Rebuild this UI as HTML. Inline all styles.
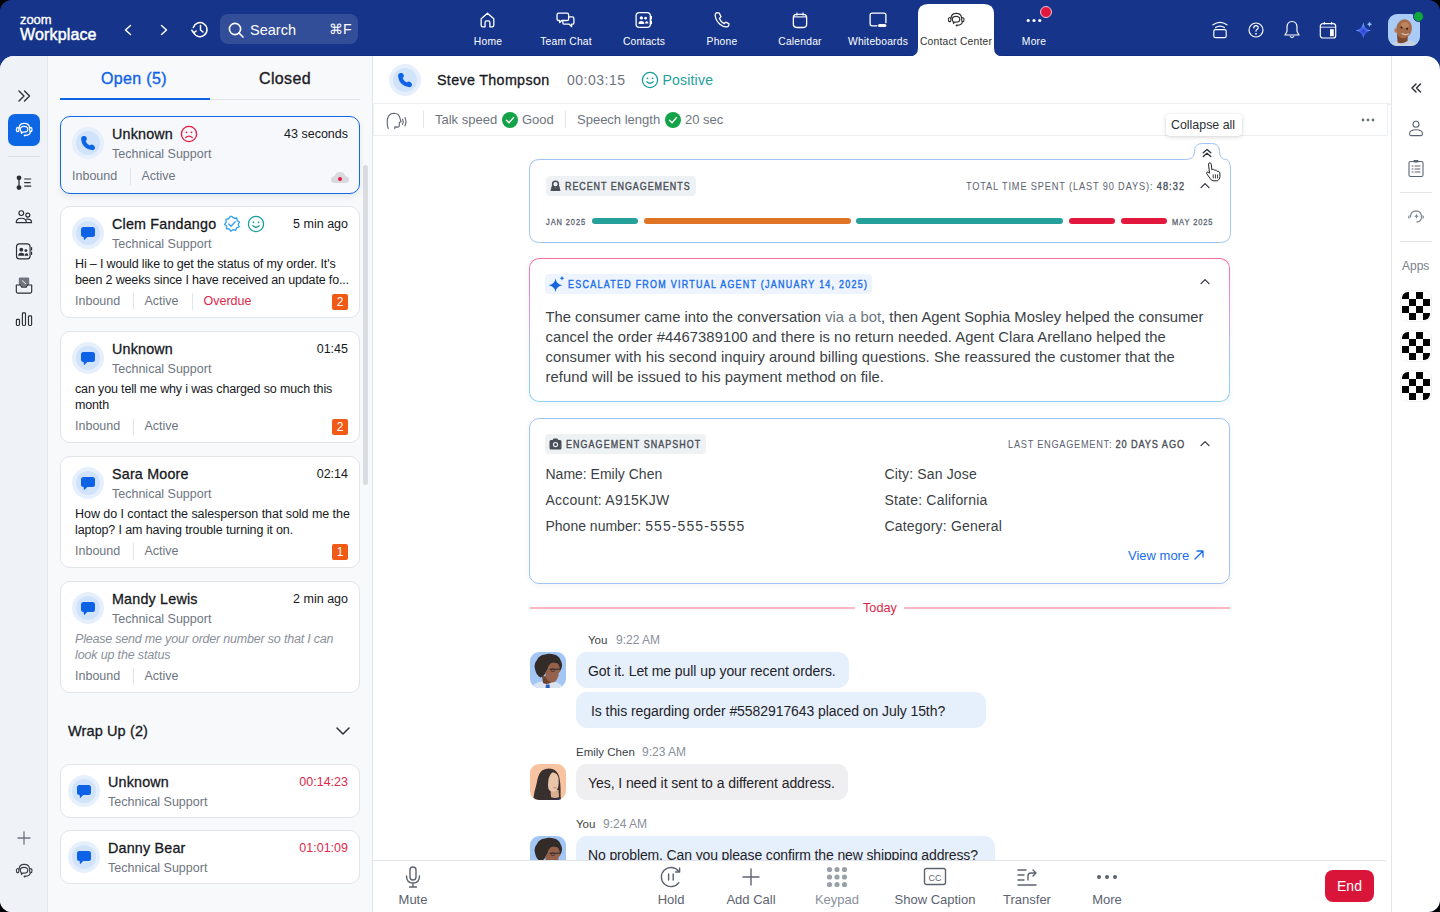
<!DOCTYPE html>
<html><head><meta charset="utf-8"><style>
*{box-sizing:border-box;margin:0;padding:0}
html,body{width:1440px;height:912px;overflow:hidden;background:#000;font-family:"Liberation Sans",sans-serif;color:#131619}
.abs{position:absolute}
.t{position:absolute;white-space:nowrap}
.sb{font-weight:400;-webkit-text-stroke:0.3px currentColor}
#win{position:absolute;left:0;top:0;width:1440px;height:912px;background:#15348a;border-radius:12px;overflow:hidden}
#body{position:absolute;left:0;top:56px;width:1440px;height:856px;background:#fff;border-radius:14px 14px 0 0;overflow:hidden}
</style></head><body>
<div id="win">
 <div class="abs" style="left:0;top:0;width:1440px;height:56px;background:#15348a">
  <div class="abs" style="left:20px;top:12px;font-size:13px;font-weight:400;-webkit-text-stroke:0.35px #fff;color:#fff;letter-spacing:-0.1px;line-height:16px">zoom</div>
  <div class="abs" style="left:20px;top:25.5px;font-size:16px;font-weight:400;-webkit-text-stroke:0.45px #fff;color:#fff;letter-spacing:0.15px;line-height:18px">Workplace</div>
  <svg class="abs" style="left:122px;top:23px" width="12" height="14" viewBox="0 0 12 14"><path d="M8.5 2.5 L3.5 7 L8.5 11.5" fill="none" stroke="#fff" stroke-width="1.5" stroke-linecap="round" stroke-linejoin="round"/></svg>
  <svg class="abs" style="left:158px;top:23px" width="12" height="14" viewBox="0 0 12 14"><path d="M3.5 2.5 L8.5 7 L3.5 11.5" fill="none" stroke="#fff" stroke-width="1.5" stroke-linecap="round" stroke-linejoin="round"/></svg>
  <svg class="abs" style="left:190px;top:20px" width="20" height="20" viewBox="0 0 20 20"><path d="M3.6 12.5 A7 7 0 1 0 3.3 7.5" fill="none" stroke="#fff" stroke-width="1.5" stroke-linecap="round"/><path d="M1.8 10.2 L3.6 12.8 L6.2 11" fill="none" stroke="#fff" stroke-width="1.5" stroke-linecap="round" stroke-linejoin="round"/><path d="M10.5 5.5 V10 L13 12" fill="none" stroke="#fff" stroke-width="1.5" stroke-linecap="round" stroke-linejoin="round"/></svg>
  <div class="abs" style="left:220px;top:14px;width:138px;height:30px;border-radius:8px;background:rgba(255,255,255,0.13)"></div>
  <svg class="abs" style="left:228px;top:22px" width="17" height="17" viewBox="0 0 17 17"><circle cx="7" cy="7" r="5.6" fill="none" stroke="#fff" stroke-width="1.6"/><path d="M11 11 L15 15" stroke="#fff" stroke-width="1.7" stroke-linecap="round"/></svg>
  <div class="abs" style="left:250px;top:21.5px;font-size:14.5px;color:#fff;line-height:17px">Search</div>
  <div class="abs" style="left:329px;top:21px;font-size:14px;color:#fff;line-height:17px">&#8984;F</div>
  <svg class="abs" style="left:908px;top:4px" width="96" height="53" viewBox="0 0 96 53"><path d="M1 53 V52.5 Q10 52.5 10 44 V10 Q10 0 20 0 H76 Q86 0 86 10 V44 Q86 52.5 95 52.5 V53 Z" fill="#fff"/></svg>
  <svg class="abs" style="left:478px;top:10px" width="20" height="20" viewBox="0 0 19 19"><path d="M3 8.2 L9 3 L15 8.2 V14.5 Q15 16 13.5 16 H11.3 V11.8 Q11.3 10.3 9.8 10.3 H8.2 Q6.7 10.3 6.7 11.8 V16 H4.5 Q3 16 3 14.5 Z" fill="none" stroke="#fff" stroke-width="1.25" stroke-linecap="round" stroke-linejoin="round"/></svg>
  <div class="abs" style="left:443px;width:90px;top:35px;text-align:center;font-size:10.3px;letter-spacing:0.2px;line-height:13px;color:#fff">Home</div>
  <svg class="abs" style="left:556px;top:10px" width="20" height="20" viewBox="0 0 19 19"><path d="M2.5 3 H10.5 Q12 3 12 4.5 V8.5 Q12 10 10.5 10 H5.5 L3.5 12 V10 H2.5 Q1 10 1 8.5 V4.5 Q1 3 2.5 3 Z" fill="none" stroke="#fff" stroke-width="1.25" stroke-linecap="round" stroke-linejoin="round"/><path d="M12 6.5 H15.5 Q17 6.5 17 8 V12 Q17 13.5 15.5 13.5 H14.8 V15.8 L12.6 13.5 H8 Q6.5 13.5 6.5 12 V10" fill="none" stroke="#fff" stroke-width="1.25" stroke-linecap="round" stroke-linejoin="round"/></svg>
  <div class="abs" style="left:521px;width:90px;top:35px;text-align:center;font-size:10.3px;letter-spacing:0.2px;line-height:13px;color:#fff">Team Chat</div>
  <svg class="abs" style="left:634px;top:10px" width="20" height="20" viewBox="0 0 19 19"><rect x="2" y="2.5" width="13.5" height="14" rx="3" fill="none" stroke="#fff" stroke-width="1.25" stroke-linecap="round" stroke-linejoin="round"/><path d="M16.5 6 V8.5 M16.5 10.5 V13" fill="none" stroke="#fff" stroke-width="1.25" stroke-linecap="round" stroke-linejoin="round"/><circle cx="7" cy="7.5" r="1.6" fill="#fff"/><circle cx="11" cy="7.8" r="1.3" fill="#fff"/><path d="M4.2 13.2 Q4.2 10.4 7 10.4 Q9.8 10.4 9.8 13.2 Z" fill="#fff"/><path d="M10.4 12.8 Q10.6 10.6 12.4 10.8 Q13.8 11 13.6 12.8 Z" fill="#fff"/></svg>
  <div class="abs" style="left:599px;width:90px;top:35px;text-align:center;font-size:10.3px;letter-spacing:0.2px;line-height:13px;color:#fff">Contacts</div>
  <svg class="abs" style="left:712px;top:10px" width="20" height="20" viewBox="0 0 19 19"><path d="M4.5 2.5 Q3 3 3 5 Q3.5 10 7.5 13.5 Q11 16.5 14.5 16 Q16 15.5 16 14.5 V13 L13 11.5 L11.5 13 Q8.5 11.5 7 8 L8.5 6.5 L7 3 Z" fill="none" stroke="#fff" stroke-width="1.25" stroke-linecap="round" stroke-linejoin="round"/></svg>
  <div class="abs" style="left:677px;width:90px;top:35px;text-align:center;font-size:10.3px;letter-spacing:0.2px;line-height:13px;color:#fff">Phone</div>
  <svg class="abs" style="left:790px;top:10px" width="20" height="20" viewBox="0 0 19 19"><rect x="3.2" y="4.2" width="12.6" height="12.4" rx="3" fill="none" stroke="#fff" stroke-width="1.25" stroke-linecap="round" stroke-linejoin="round"/><path d="M3.5 6.6 H15.5 M6.6 2.8 V5 M12.4 2.8 V5" fill="none" stroke="#fff" stroke-width="1.1" stroke-linecap="round" stroke-linejoin="round" opacity="0.9"/></svg>
  <div class="abs" style="left:755px;width:90px;top:35px;text-align:center;font-size:10.3px;letter-spacing:0.2px;line-height:13px;color:#fff">Calendar</div>
  <svg class="abs" style="left:868px;top:10px" width="20" height="20" viewBox="0 0 19 19"><path d="M8.5 15 H4 Q2 15 2 13 V5 Q2 3 4 3 H15 Q17 3 17 5 V12" fill="none" stroke="#fff" stroke-width="1.25" stroke-linecap="round" stroke-linejoin="round"/><rect x="9.5" y="13.2" width="8" height="3" rx="1.5" fill="#fff"/></svg>
  <div class="abs" style="left:833px;width:90px;top:35px;text-align:center;font-size:10.3px;letter-spacing:0.2px;line-height:13px;color:#fff">Whiteboards</div>
  <svg class="abs" style="left:946px;top:10px" width="20" height="20" viewBox="0 0 20 20"><path d="M5 8.2 Q5.3 3.4 10.3 3.4 Q15.3 3.4 15.6 8" fill="none" stroke="#333" stroke-width="1.2" stroke-linecap="round" stroke-linejoin="round"/><ellipse cx="3.7" cy="9.6" rx="1.3" ry="2.1" fill="none" stroke="#333" stroke-width="1.2" stroke-linecap="round" stroke-linejoin="round"/><ellipse cx="16.8" cy="9.6" rx="1.2" ry="2.1" fill="none" stroke="#333" stroke-width="1.2" stroke-linecap="round" stroke-linejoin="round"/><path d="M16.4 11.8 Q16 15.2 11 15.4" fill="none" stroke="#333" stroke-width="1.2" stroke-linecap="round" stroke-linejoin="round"/><circle cx="10.6" cy="15.4" r="1" fill="#333"/><path d="M6.3 9.2 Q6.3 6.3 10 6.3 Q13.8 6.3 13.8 9.2 Q13.8 12.1 10 12.1 H8.4 L7.5 13.5 L7.3 11.7 Q6.3 11 6.3 9.2 Z" fill="none" stroke="#333" stroke-width="1.2" stroke-linecap="round" stroke-linejoin="round"/></svg>
  <div class="abs" style="left:911px;width:90px;top:35px;text-align:center;font-size:10.3px;letter-spacing:0.2px;line-height:13px;color:#333">Contact Center</div>
  <svg class="abs" style="left:1024px;top:10px" width="20" height="20" viewBox="0 0 19 19"><circle cx="4" cy="10" r="1.5" fill="#fff"/><circle cx="9.5" cy="10" r="1.5" fill="#fff"/><circle cx="15" cy="10" r="1.5" fill="#fff"/></svg>
  <div class="abs" style="left:989px;width:90px;top:35px;text-align:center;font-size:10.3px;letter-spacing:0.2px;line-height:13px;color:#fff">More</div>
  <div class="abs" style="left:1040px;top:6px;width:12px;height:12px;border-radius:50%;background:#e3173e;border:1px solid #e9c6d3"></div>
  <svg class="abs" style="left:1209px;top:19px" width="22" height="22" viewBox="0 0 22 22"><path d="M4 5.8 Q11 0.8 18 5.8 M6.6 8.6 Q11 5.6 15.4 8.6" fill="none" stroke="#fff" stroke-width="1.15" stroke-linecap="round"/><rect x="4.8" y="10.6" width="12.4" height="8" rx="1.6" fill="none" stroke="#fff" stroke-width="1.15"/></svg>
  <svg class="abs" style="left:1246px;top:20px" width="20" height="20" viewBox="0 0 20 20"><circle cx="10" cy="10" r="7" fill="none" stroke="#fff" stroke-width="1.15" stroke-linecap="round" stroke-linejoin="round"/><path d="M7.8 8 Q7.8 5.6 10 5.6 Q12.2 5.6 12.2 7.7 Q12.2 9 10.6 9.7 Q10 10 10 11.2" fill="none" stroke="#fff" stroke-width="1.15" stroke-linecap="round" stroke-linejoin="round"/><circle cx="10" cy="13.8" r="0.9" fill="#fff"/></svg>
  <svg class="abs" style="left:1282px;top:19px" width="20" height="22" viewBox="0 0 20 22"><path d="M10 2.5 Q15 2.5 15 8.5 V12.5 L17 16 H3 L5 12.5 V8.5 Q5 2.5 10 2.5 Z" fill="none" stroke="#fff" stroke-width="1.15" stroke-linecap="round" stroke-linejoin="round"/><path d="M8.3 17.5 Q10 19.5 11.7 17.5" fill="none" stroke="#fff" stroke-width="1.15" stroke-linecap="round" stroke-linejoin="round"/></svg>
  <svg class="abs" style="left:1318px;top:20px" width="20" height="20" viewBox="0 0 20 20"><rect x="2.3" y="3.6" width="15.4" height="14.4" rx="2.6" fill="none" stroke="#fff" stroke-width="1.2" stroke-linecap="round" stroke-linejoin="round"/><path d="M2.5 7.2 H17.5" stroke="#fff" stroke-width="1" opacity="0.85"/><path d="M6.3 2.4 V4 M13.7 2.4 V4" fill="none" stroke="#fff" stroke-width="1.2" stroke-linecap="round" stroke-linejoin="round"/><rect x="12" y="9.2" width="3.8" height="7" fill="#fff"/></svg>
  <svg class="abs" style="left:1353px;top:18px" width="22" height="22" viewBox="0 0 22 22"><defs><radialGradient id="spk" cx="0.5" cy="0.55" r="0.5"><stop offset="0" stop-color="#2b3fd6"/><stop offset="0.55" stop-color="#4a6ff0"/><stop offset="1" stop-color="#8cc4ff"/></radialGradient></defs><path d="M10.3 4.5 Q11.2 11 17.8 12.5 Q11.2 14 10.3 20.5 Q9.4 14 2.8 12.5 Q9.4 11 10.3 4.5 Z" fill="url(#spk)"/><path d="M16.5 3.5 Q16.9 5.8 19 6.3 Q16.9 6.8 16.5 9 Q16.1 6.8 14 6.3 Q16.1 5.8 16.5 3.5 Z" fill="#8cc4ff"/></svg>
  <div class="abs" style="left:1388px;top:14px;width:32px;height:32px;border-radius:9px;background:#a9cbf5;overflow:hidden"><svg width="32" height="32" viewBox="0 0 32 32"><path d="M2 33 Q5 27.5 11 26.5 L21 26 Q28 27.5 30 33 Z" fill="#c6d1e2"/><path d="M9 20 L9.5 28.5 Q14 30.5 19.5 27 L20 20 Z" fill="#7a4930"/><ellipse cx="16" cy="14.8" rx="7.8" ry="9.6" transform="rotate(12 16 14.8)" fill="#a66c49"/><ellipse cx="17" cy="11" rx="4" ry="3" fill="#bd845e"/><ellipse cx="7.8" cy="16.5" rx="1.5" ry="2.3" fill="#b57a55"/><circle cx="13.5" cy="13.5" r="1" fill="#2a1a12"/><circle cx="19" cy="14.8" r="1" fill="#2a1a12"/><path d="M14 19.5 Q17 21.5 20.5 20" stroke="#d8c2b0" stroke-width="1.1" fill="none" stroke-linecap="round"/></svg></div>
  <div class="abs" style="left:1412.5px;top:10.5px;width:11px;height:11px;border-radius:50%;background:#0fa83a;border:1.5px solid #15348a"></div>
 </div>
 <div class="abs" style="left:16px;top:55px;width:894px;height:1px;background:#112e80"></div><div class="abs" style="left:1003px;top:55px;width:421px;height:1px;background:#112e80"></div>
 <div id="body">
<div class="abs" style="left:0;top:0;width:47px;height:856px;background:#eff2f6"></div>
<div class="abs" style="left:47px;top:0;width:1px;height:856px;background:#e3e6ea"></div>
<div class="abs" style="left:48px;top:0;width:324px;height:856px;background:#f7f9fb"></div>
<div class="abs" style="left:372px;top:0;width:1px;height:856px;background:#e1e4e9"></div>
<div class="abs" style="left:1391px;top:0;width:1px;height:856px;background:#e1e4e9"></div>
<div class="abs" style="left:0;top:0">
   <svg class="abs" style="left:16px;top:33px" width="16" height="14" viewBox="0 0 16 14"><path d="M3 2 L8 7 L3 12 M8.5 2 L13.5 7 L8.5 12" fill="none" stroke="#2b2f36" stroke-width="1.4" stroke-linecap="round" stroke-linejoin="round"/></svg>
   <div class="abs" style="left:8px;top:58px;width:32px;height:32px;border-radius:7px;background:#0d66e3"></div>
   <svg class="abs" style="left:14px;top:64px" width="20" height="20" viewBox="0 0 20 20"><path d="M5 8.2 Q5.3 3.4 10.3 3.4 Q15.3 3.4 15.6 8" fill="none" stroke="#fff" stroke-width="1.3" stroke-linecap="round" stroke-linejoin="round"/><ellipse cx="3.7" cy="9.6" rx="1.3" ry="2.1" fill="none" stroke="#fff" stroke-width="1.3" stroke-linecap="round" stroke-linejoin="round"/><ellipse cx="16.8" cy="9.6" rx="1.2" ry="2.1" fill="none" stroke="#fff" stroke-width="1.3" stroke-linecap="round" stroke-linejoin="round"/><path d="M16.4 11.8 Q16 15.2 11 15.4" fill="none" stroke="#fff" stroke-width="1.3" stroke-linecap="round" stroke-linejoin="round"/><circle cx="10.6" cy="15.4" r="1" fill="#fff"/><path d="M6.3 9.2 Q6.3 6.3 10 6.3 Q13.8 6.3 13.8 9.2 Q13.8 12.1 10 12.1 H8.4 L7.5 13.5 L7.3 11.7 Q6.3 11 6.3 9.2 Z" fill="none" stroke="#fff" stroke-width="1.3" stroke-linecap="round" stroke-linejoin="round"/></svg>
   <div class="abs" style="left:8px;top:100px;width:32px;height:1px;background:#dde1e6"></div>
   <svg class="abs" style="left:14px;top:116px" width="20" height="20" viewBox="0 0 20 20"><circle cx="5" cy="5.8" r="2.4" fill="#2b2f36"/><circle cx="5" cy="15.6" r="2.4" fill="#2b2f36"/><path d="M5 6 V15.5" stroke="#2b2f36" stroke-width="1.3"/><path d="M10.2 7 H17.2 M10.2 10.6 H16.6 M10.2 14.1 H17.2" stroke="#2b2f36" stroke-width="1.1"/></svg>
   <svg class="abs" style="left:14px;top:151px" width="20" height="20" viewBox="0 0 20 20"><g fill="none" stroke="#2b2f36" stroke-width="1.15" stroke-linecap="round" stroke-linejoin="round"><circle cx="7.3" cy="6.1" r="2.4"/><path d="M2.2 15.6 Q2.2 11.2 7.3 11.2 Q12.4 11.2 12.4 15.6 Z"/><circle cx="13.8" cy="8.1" r="2"/><path d="M12.6 12.1 Q17.6 11.7 17.6 15.6 H13"/></g></svg>
   <svg class="abs" style="left:14px;top:185px" width="20" height="20" viewBox="0 0 20 20"><rect x="2.5" y="2.9" width="13.6" height="15" rx="3" fill="none" stroke="#2b2f36" stroke-width="1.15" stroke-linecap="round" stroke-linejoin="round"/><path d="M17.6 6.5 V9 M17.6 11 V13.5" fill="none" stroke="#2b2f36" stroke-width="1.15" stroke-linecap="round" stroke-linejoin="round"/><circle cx="7.3" cy="8.7" r="1.9" fill="#2b2f36"/><circle cx="11.9" cy="9.6" r="1.45" fill="#2b2f36"/><path d="M4.2 14.7 Q4.2 11.7 7.3 11.7 Q10.4 11.7 10.4 14.7 Z" fill="#2b2f36"/><path d="M10.6 14.7 Q10.8 12.3 12.5 12.3 Q14.3 12.3 14.3 14.7 Z" fill="#2b2f36"/></svg>
   <svg class="abs" style="left:14px;top:219px" width="20" height="20" viewBox="0 0 20 20"><path d="M4.8 10 V3.6 Q4.8 2.5 5.9 2.5 H14.1 Q15.2 2.5 15.2 3.6 V10 H13 L12 11.6 H8 L7 10 Z" fill="#72777f"/><path d="M8 5.5 L12 9" stroke="#eff2f6" stroke-width="1"/><path d="M2.3 10 H6.5 L7.8 12.1 H12.2 L13.5 10 H17.7 V16.6 Q17.7 18.1 16.2 18.1 H3.8 Q2.3 18.1 2.3 16.6 Z" fill="none" stroke="#2b2f36" stroke-width="1.15" stroke-linecap="round" stroke-linejoin="round"/></svg>
   <svg class="abs" style="left:14px;top:254px" width="20" height="20" viewBox="0 0 20 20"><g fill="none" stroke="#2b2f36" stroke-width="1.15" stroke-linecap="round" stroke-linejoin="round"><rect x="2.4" y="9.4" width="3.1" height="6.1" rx="0.9"/><rect x="8.4" y="2.8" width="3.1" height="12.7" rx="0.9"/><rect x="14.5" y="5.8" width="3.1" height="9.7" rx="0.9"/></g></svg>
   <svg class="abs" style="left:16px;top:774px" width="16" height="16" viewBox="0 0 16 16"><path d="M8 2 V14 M2 8 H14" stroke="#6e7680" stroke-width="1.3" stroke-linecap="round"/></svg>
   <svg class="abs" style="left:14px;top:805px" width="20" height="20" viewBox="0 0 20 20"><path d="M5 8.2 Q5.3 3.4 10.3 3.4 Q15.3 3.4 15.6 8" fill="none" stroke="#3a3f47" stroke-width="1.2" stroke-linecap="round" stroke-linejoin="round"/><ellipse cx="3.7" cy="9.6" rx="1.3" ry="2.1" fill="none" stroke="#3a3f47" stroke-width="1.2" stroke-linecap="round" stroke-linejoin="round"/><ellipse cx="16.8" cy="9.6" rx="1.2" ry="2.1" fill="none" stroke="#3a3f47" stroke-width="1.2" stroke-linecap="round" stroke-linejoin="round"/><path d="M16.4 11.8 Q16 15.2 11 15.4" fill="none" stroke="#3a3f47" stroke-width="1.2" stroke-linecap="round" stroke-linejoin="round"/><circle cx="10.6" cy="15.4" r="1" fill="#3a3f47"/><path d="M6.3 9.2 Q6.3 6.3 10 6.3 Q13.8 6.3 13.8 9.2 Q13.8 12.1 10 12.1 H8.4 L7.5 13.5 L7.3 11.7 Q6.3 11 6.3 9.2 Z" fill="none" stroke="#3a3f47" stroke-width="1.2" stroke-linecap="round" stroke-linejoin="round"/></svg>
  </div></div>
 <div class="t sb" style="left:101px;top:69.5px;font-size:16px;letter-spacing:0.35px;-webkit-text-stroke:0.35px #0e62e6;color:#0e62e6;line-height:18px">Open (5)</div><div class="abs" style="left:60px;top:98px;width:150px;height:2px;background:#0e62e6"></div><div class="abs" style="left:210px;top:99px;width:150px;height:1px;background:#dfe3e8"></div><div class="t sb" style="left:259px;top:69.5px;font-size:16px;letter-spacing:0.35px;-webkit-text-stroke:0.35px #1d2024;color:#1d2024;line-height:18px">Closed</div><div class="abs" style="left:363px;top:165px;width:5px;height:320px;border-radius:3px;background:#d9dce0"></div><div class="abs" style="left:60px;top:116px;width:300px;height:78px;border-radius:10px;border:1.3px solid #1069e6;background:#f6f8fb;box-shadow:0 3px 6px rgba(0,0,0,0.08)"></div><div class="abs" style="left:72px;top:127px;width:32px;height:32px;border-radius:50%;background:#e6effc"></div><div class="abs" style="left:76px;top:131px;width:24px;height:24px;border-radius:50%;background:#d1e3fa"></div><svg class="abs" style="left:80px;top:135px" width="16" height="16" viewBox="0 0 16 16"><path d="M2.5 1.2 Q1 1.8 1.1 4 Q1.5 9 5 12.3 Q8.5 15.3 12.8 15.2 Q14.6 15 15 13.3 Q15.2 11.3 13.5 10.2 L12.6 9.7 Q11 9 10 10.4 Q7 9.4 5.6 6.3 Q7 5.3 6.9 3.6 Q6.5 1.6 5 1.1 Q3.7 0.8 2.5 1.2 Z" fill="#0b66e4"/></svg><div class="t sb" style="left:112px;top:126.5px;font-size:14.3px;letter-spacing:0.2px;line-height:15px;color:#16191d">Unknown</div><svg class="abs" style="left:180px;top:125px" width="18" height="18" viewBox="0 0 18 18"><circle cx="9" cy="9" r="7.6" fill="none" stroke="#e8173f" stroke-width="1.3"/><circle cx="6.5" cy="7.3" r="0.9" fill="#e8173f"/><circle cx="11.5" cy="7.3" r="0.9" fill="#e8173f"/><path d="M5.8 12.5 Q9 9.8 12.2 12.5" fill="none" stroke="#e8173f" stroke-width="1.3" stroke-linecap="round"/></svg><div class="t" style="right:1092px;top:127px;font-size:12.5px;line-height:15px;color:#16191d">43 seconds</div><div class="t" style="left:112px;top:147px;font-size:12.5px;line-height:15px;color:#6e7580">Technical Support</div><div class="t" style="left:72px;top:169px;font-size:12.5px;line-height:15px;color:#6e7580">Inbound</div><div class="abs" style="left:129.5px;top:168px;width:1px;height:17px;background:#e1e4e8"></div><div class="t" style="left:141.5px;top:169px;font-size:12.5px;line-height:15px;color:#6e7580">Active</div><svg class="abs" style="left:330px;top:170px" width="20" height="14" viewBox="0 0 20 14"><path d="M5 13 Q1 13 1 9.5 Q1 6.5 4.5 6.3 Q5.5 2 10 2 Q14.5 2 15.3 6.3 Q19 6.5 19 9.8 Q19 13 15.5 13 Z" fill="#d7d9dd"/><circle cx="10" cy="9" r="2" fill="#e8173f"/></svg><div class="abs" style="left:60px;top:206px;width:300px;height:112px;border-radius:10px;border:1px solid #e1e4e8;background:#fff"></div><div class="abs" style="left:72px;top:217px;width:32px;height:32px;border-radius:50%;background:#e6effc"></div><div class="abs" style="left:76px;top:221px;width:24px;height:24px;border-radius:50%;background:#d1e3fa"></div><svg class="abs" style="left:80px;top:225px" width="16" height="16" viewBox="0 0 16 16"><path d="M3.5 2 H12.5 Q15 2 15 4.5 V9.5 Q15 12 12.5 12 H7.3 L4 15.2 L3.6 12 Q1 12 1 9.5 V4.5 Q1 2 3.5 2 Z" fill="#0e62e6"/></svg><div class="t sb" style="left:112px;top:216.5px;font-size:14.3px;letter-spacing:0.2px;line-height:15px;color:#16191d">Clem Fandango</div><svg class="abs" style="left:223px;top:215px" width="18" height="18" viewBox="0 0 18 18"><path d="M9 1.5 L11 3.3 L13.6 3 L14.2 5.6 L16.5 7 L15.3 9.3 L16.1 11.9 L13.6 12.8 L12.6 15.3 L10 14.6 L7.8 16.2 L6.3 14 L3.6 13.8 L3.5 11.1 L1.6 9.3 L3.2 7.1 L3 4.4 L5.6 3.8 L7 1.5 Z" fill="none" stroke="#3aa3ee" stroke-width="1.4" stroke-linejoin="round"/><path d="M5.8 9 L8 11.2 L12.2 6.8" fill="none" stroke="#3aa3ee" stroke-width="1.4" stroke-linecap="round" stroke-linejoin="round"/></svg><svg class="abs" style="left:247px;top:215px" width="18" height="18" viewBox="0 0 18 18"><circle cx="9" cy="9" r="7.6" fill="none" stroke="#1a9d9b" stroke-width="1.3"/><circle cx="6.5" cy="7.3" r="0.9" fill="#1a9d9b"/><circle cx="11.5" cy="7.3" r="0.9" fill="#1a9d9b"/><path d="M5.8 10.8 Q9 13.8 12.2 10.8" fill="none" stroke="#1a9d9b" stroke-width="1.3" stroke-linecap="round"/></svg><div class="t" style="right:1092px;top:217px;font-size:12.5px;line-height:15px;color:#16191d">5 min ago</div><div class="t" style="left:112px;top:237px;font-size:12.5px;line-height:15px;color:#6e7580">Technical Support</div><div class="t" style="left:75px;top:257px;font-size:12.5px;letter-spacing:-0.15px;line-height:15px;color:#16191d;">Hi – I would like to get the status of my order. It's</div><div class="t" style="left:75px;top:273px;font-size:12.5px;letter-spacing:-0.15px;line-height:15px;color:#16191d;">been 2 weeks since I have received an update fo...</div><div class="t" style="left:75px;top:294px;font-size:12.5px;line-height:15px;color:#6e7580">Inbound</div><div class="abs" style="left:132.5px;top:293px;width:1px;height:17px;background:#e1e4e8"></div><div class="t" style="left:144.5px;top:294px;font-size:12.5px;line-height:15px;color:#6e7580">Active</div><div class="abs" style="left:191.5px;top:293px;width:1px;height:17px;background:#e1e4e8"></div><div class="t" style="left:203.5px;top:294px;font-size:12.5px;line-height:15px;color:#e0294a">Overdue</div><div class="abs" style="left:332px;top:294px;width:16px;height:16px;border-radius:2px;background:#f05a14;color:#fff;font-size:12px;line-height:16px;text-align:center">2</div><div class="abs" style="left:60px;top:331px;width:300px;height:112px;border-radius:10px;border:1px solid #e1e4e8;background:#fff"></div><div class="abs" style="left:72px;top:342px;width:32px;height:32px;border-radius:50%;background:#e6effc"></div><div class="abs" style="left:76px;top:346px;width:24px;height:24px;border-radius:50%;background:#d1e3fa"></div><svg class="abs" style="left:80px;top:350px" width="16" height="16" viewBox="0 0 16 16"><path d="M3.5 2 H12.5 Q15 2 15 4.5 V9.5 Q15 12 12.5 12 H7.3 L4 15.2 L3.6 12 Q1 12 1 9.5 V4.5 Q1 2 3.5 2 Z" fill="#0e62e6"/></svg><div class="t sb" style="left:112px;top:341.5px;font-size:14.3px;letter-spacing:0.2px;line-height:15px;color:#16191d">Unknown</div><div class="t" style="right:1092px;top:342px;font-size:12.5px;line-height:15px;color:#16191d">01:45</div><div class="t" style="left:112px;top:362px;font-size:12.5px;line-height:15px;color:#6e7580">Technical Support</div><div class="t" style="left:75px;top:382px;font-size:12.5px;letter-spacing:-0.15px;line-height:15px;color:#16191d;">can you tell me why i was charged so much this</div><div class="t" style="left:75px;top:398px;font-size:12.5px;letter-spacing:-0.15px;line-height:15px;color:#16191d;">month</div><div class="t" style="left:75px;top:419px;font-size:12.5px;line-height:15px;color:#6e7580">Inbound</div><div class="abs" style="left:132.5px;top:418px;width:1px;height:17px;background:#e1e4e8"></div><div class="t" style="left:144.5px;top:419px;font-size:12.5px;line-height:15px;color:#6e7580">Active</div><div class="abs" style="left:332px;top:419px;width:16px;height:16px;border-radius:2px;background:#f05a14;color:#fff;font-size:12px;line-height:16px;text-align:center">2</div><div class="abs" style="left:60px;top:456px;width:300px;height:112px;border-radius:10px;border:1px solid #e1e4e8;background:#fff"></div><div class="abs" style="left:72px;top:467px;width:32px;height:32px;border-radius:50%;background:#e6effc"></div><div class="abs" style="left:76px;top:471px;width:24px;height:24px;border-radius:50%;background:#d1e3fa"></div><svg class="abs" style="left:80px;top:475px" width="16" height="16" viewBox="0 0 16 16"><path d="M3.5 2 H12.5 Q15 2 15 4.5 V9.5 Q15 12 12.5 12 H7.3 L4 15.2 L3.6 12 Q1 12 1 9.5 V4.5 Q1 2 3.5 2 Z" fill="#0e62e6"/></svg><div class="t sb" style="left:112px;top:466.5px;font-size:14.3px;letter-spacing:0.2px;line-height:15px;color:#16191d">Sara Moore</div><div class="t" style="right:1092px;top:467px;font-size:12.5px;line-height:15px;color:#16191d">02:14</div><div class="t" style="left:112px;top:487px;font-size:12.5px;line-height:15px;color:#6e7580">Technical Support</div><div class="t" style="left:75px;top:507px;font-size:12.5px;letter-spacing:-0.05px;line-height:15px;color:#16191d;">How do I contact the salesperson that sold me the</div><div class="t" style="left:75px;top:523px;font-size:12.5px;letter-spacing:-0.12px;line-height:15px;color:#16191d;">laptop? I am having trouble turning it on.</div><div class="t" style="left:75px;top:544px;font-size:12.5px;line-height:15px;color:#6e7580">Inbound</div><div class="abs" style="left:132.5px;top:543px;width:1px;height:17px;background:#e1e4e8"></div><div class="t" style="left:144.5px;top:544px;font-size:12.5px;line-height:15px;color:#6e7580">Active</div><div class="abs" style="left:332px;top:544px;width:16px;height:16px;border-radius:2px;background:#f05a14;color:#fff;font-size:12px;line-height:16px;text-align:center">1</div><div class="abs" style="left:60px;top:581px;width:300px;height:112px;border-radius:10px;border:1px solid #e1e4e8;background:#fff"></div><div class="abs" style="left:72px;top:592px;width:32px;height:32px;border-radius:50%;background:#e6effc"></div><div class="abs" style="left:76px;top:596px;width:24px;height:24px;border-radius:50%;background:#d1e3fa"></div><svg class="abs" style="left:80px;top:600px" width="16" height="16" viewBox="0 0 16 16"><path d="M3.5 2 H12.5 Q15 2 15 4.5 V9.5 Q15 12 12.5 12 H7.3 L4 15.2 L3.6 12 Q1 12 1 9.5 V4.5 Q1 2 3.5 2 Z" fill="#0e62e6"/></svg><div class="t sb" style="left:112px;top:591.5px;font-size:14.3px;letter-spacing:0.2px;line-height:15px;color:#16191d">Mandy Lewis</div><div class="t" style="right:1092px;top:592px;font-size:12.5px;line-height:15px;color:#16191d">2 min ago</div><div class="t" style="left:112px;top:612px;font-size:12.5px;line-height:15px;color:#6e7580">Technical Support</div><div class="t" style="left:75px;top:632px;font-size:12.5px;letter-spacing:-0.2px;line-height:15px;color:#8a9099;font-style:italic;">Please send me your order number so that I can</div><div class="t" style="left:75px;top:648px;font-size:12.5px;letter-spacing:-0.15px;line-height:15px;color:#8a9099;font-style:italic;">look up the status</div><div class="t" style="left:75px;top:669px;font-size:12.5px;line-height:15px;color:#6e7580">Inbound</div><div class="abs" style="left:132.5px;top:668px;width:1px;height:17px;background:#e1e4e8"></div><div class="t" style="left:144.5px;top:669px;font-size:12.5px;line-height:15px;color:#6e7580">Active</div><div class="t sb" style="left:68px;top:722.5px;font-size:14.5px;letter-spacing:0.12px;line-height:16px;color:#16191d">Wrap Up (2)</div><svg class="abs" style="left:335px;top:725px" width="16" height="12" viewBox="0 0 16 12"><path d="M2 3 L8 9 L14 3" fill="none" stroke="#2b2f36" stroke-width="1.5" stroke-linecap="round" stroke-linejoin="round"/></svg><div class="abs" style="left:60px;top:764px;width:300px;height:54px;border-radius:10px;border:1px solid #e1e4e8;background:#fff"></div><div class="abs" style="left:68px;top:775px;width:32px;height:32px;border-radius:50%;background:#e6effc"></div><div class="abs" style="left:72px;top:779px;width:24px;height:24px;border-radius:50%;background:#d1e3fa"></div><svg class="abs" style="left:76px;top:783px" width="16" height="16" viewBox="0 0 16 16"><path d="M3.5 2 H12.5 Q15 2 15 4.5 V9.5 Q15 12 12.5 12 H7.3 L4 15.2 L3.6 12 Q1 12 1 9.5 V4.5 Q1 2 3.5 2 Z" fill="#0e62e6"/></svg><div class="t sb" style="left:108px;top:774.5px;font-size:14.3px;letter-spacing:0.2px;line-height:15px;color:#16191d">Unknown</div><div class="t" style="right:1092px;top:775px;font-size:12.5px;line-height:15px;color:#e0294a">00:14:23</div><div class="t" style="left:108px;top:795px;font-size:12.5px;line-height:15px;color:#6e7580">Technical Support</div><div class="abs" style="left:60px;top:830px;width:300px;height:54px;border-radius:10px;border:1px solid #e1e4e8;background:#fff"></div><div class="abs" style="left:68px;top:841px;width:32px;height:32px;border-radius:50%;background:#e6effc"></div><div class="abs" style="left:72px;top:845px;width:24px;height:24px;border-radius:50%;background:#d1e3fa"></div><svg class="abs" style="left:76px;top:849px" width="16" height="16" viewBox="0 0 16 16"><path d="M3.5 2 H12.5 Q15 2 15 4.5 V9.5 Q15 12 12.5 12 H7.3 L4 15.2 L3.6 12 Q1 12 1 9.5 V4.5 Q1 2 3.5 2 Z" fill="#0e62e6"/></svg><div class="t sb" style="left:108px;top:840.5px;font-size:14.3px;letter-spacing:0.2px;line-height:15px;color:#16191d">Danny Bear</div><div class="t" style="right:1092px;top:841px;font-size:12.5px;line-height:15px;color:#e0294a">01:01:09</div><div class="t" style="left:108px;top:861px;font-size:12.5px;line-height:15px;color:#6e7580">Technical Support</div>
 <div class="abs" style="left:389px;top:64px;width:32px;height:32px;border-radius:50%;background:#e6effc"></div><div class="abs" style="left:393px;top:68px;width:24px;height:24px;border-radius:50%;background:#d1e3fa"></div>
<svg class="abs" style="left:397px;top:72px" width="16" height="16" viewBox="0 0 16 16"><path d="M2.5 1.2 Q1 1.8 1.1 4 Q1.5 9 5 12.3 Q8.5 15.3 12.8 15.2 Q14.6 15 15 13.3 Q15.2 11.3 13.5 10.2 L12.6 9.7 Q11 9 10 10.4 Q7 9.4 5.6 6.3 Q7 5.3 6.9 3.6 Q6.5 1.6 5 1.1 Q3.7 0.8 2.5 1.2 Z" fill="#0e62e6"/></svg>
<div class="t sb" style="left:437px;top:71.5px;font-size:14.3px;letter-spacing:0.33px;line-height:16px;color:#16191d">Steve Thompson</div>
<div class="t" style="left:567px;top:72px;font-size:14px;letter-spacing:0.5px;line-height:16px;color:#6e7580">00:03:15</div>
<svg class="abs" style="left:641px;top:71px" width="18" height="18" viewBox="0 0 18 18"><circle cx="9" cy="9" r="7.6" fill="none" stroke="#1a9d9b" stroke-width="1.3"/><circle cx="6.5" cy="7.3" r="0.9" fill="#1a9d9b"/><circle cx="11.5" cy="7.3" r="0.9" fill="#1a9d9b"/><path d="M5.8 10.8 Q9 13.8 12.2 10.8" fill="none" stroke="#1a9d9b" stroke-width="1.3" stroke-linecap="round"/></svg>
<div class="t" style="left:662.5px;top:72px;font-size:14px;letter-spacing:0.2px;line-height:16px;color:#22a09a">Positive</div>
<div class="abs" style="left:373px;top:103px;width:1018px;height:2px;background:#eef1f4"></div>
<div class="abs" style="left:373px;top:104px;width:1015px;height:32px;border:1px solid #eef1f4;border-top:none;background:#fff"></div>
<svg class="abs" style="left:386px;top:111px" width="22" height="20" viewBox="0 0 22 20"><path d="M2.2 17.6 Q1 14 1.2 10.3 Q1.6 2.4 8 2.2 Q13.4 2.3 14.1 7.8 L15.1 10.8 L13.3 11.5 V14.4 Q13.3 16.2 11.5 16.1 L8.8 15.9 V17.8" fill="none" stroke="#5c6370" stroke-width="1.1" stroke-linecap="round" stroke-linejoin="round"/><path d="M16.6 8.2 Q17.8 10.8 16.6 13.4 M18.9 6.6 Q21 10.8 18.9 15" fill="none" stroke="#5c6370" stroke-width="1.1" stroke-linecap="round"/></svg>
<div class="abs" style="left:423px;top:111px;width:1px;height:17px;background:#e1e4e8"></div>
<div class="abs" style="left:565px;top:111px;width:1px;height:17px;background:#e1e4e8"></div>
<div class="t" style="left:435px;top:112px;font-size:13px;line-height:15px;color:#6e7580">Talk speed</div>
<svg class="abs" style="left:502px;top:112px" width="16" height="16" viewBox="0 0 16 16"><circle cx="8" cy="8" r="8" fill="#14a349"/><path d="M4.5 8.2 L7 10.7 L11.5 5.6" fill="none" stroke="#fff" stroke-width="1.4" stroke-linecap="round" stroke-linejoin="round"/></svg>
<div class="t" style="left:522px;top:112px;font-size:13px;line-height:15px;color:#6e7580">Good</div>
<div class="t" style="left:577px;top:112px;font-size:13px;line-height:15px;color:#6e7580">Speech length</div>
<svg class="abs" style="left:665px;top:112px" width="16" height="16" viewBox="0 0 16 16"><circle cx="8" cy="8" r="8" fill="#14a349"/><path d="M4.5 8.2 L7 10.7 L11.5 5.6" fill="none" stroke="#fff" stroke-width="1.4" stroke-linecap="round" stroke-linejoin="round"/></svg>
<div class="t" style="left:685px;top:112px;font-size:13px;line-height:15px;color:#6e7580">20 sec</div>
<svg class="abs" style="left:1360px;top:117px" width="16" height="6" viewBox="0 0 16 6"><circle cx="3" cy="3" r="1.4" fill="#6b717b"/><circle cx="8" cy="3" r="1.4" fill="#6b717b"/><circle cx="13" cy="3" r="1.4" fill="#6b717b"/></svg>
<svg class="abs" style="left:529px;top:143px" width="703" height="101" viewBox="0 0 703 101"><path d="M10.5 16.5 H656.5 Q665.5 16.5 665.5 8.5 Q665.5 0.5 673.5 0.5 H682.5 Q690.5 0.5 690.5 8.5 Q690.5 16.5 697.5 16.5 Q701.5 18 701.5 26.5 V89.5 Q701.5 99.5 691.5 99.5 H10.5 Q0.5 99.5 0.5 89.5 V26.5 Q0.5 16.5 10.5 16.5 Z" fill="#fff" stroke="#9fc3f2" stroke-width="1"/></svg>
<svg class="abs" style="left:1200px;top:146px" width="14" height="14" viewBox="0 0 14 14"><path d="M3.2 6.8 L7 3.4 L10.8 6.8 M3.2 10.6 L7 7.2 L10.8 10.6" fill="none" stroke="#2b2f36" stroke-width="1.3" stroke-linecap="round" stroke-linejoin="round"/></svg>
<div class="abs" style="left:546px;top:176px;width:150px;height:20px;border-radius:4px;background:#eff2f5"></div>
<svg class="abs" style="left:550px;top:180px" width="11" height="12" viewBox="0 0 11 12"><circle cx="5.5" cy="4.2" r="2.9" fill="none" stroke="#4a4f57" stroke-width="1.5"/><path d="M0.5 11 L1.6 6.2 Q1.9 5.3 2.8 5.6 L5.5 8.2 L8.2 5.6 Q9.1 5.3 9.4 6.2 L10.5 11 Z" fill="#4a4f57"/></svg>
<div class="t" style="left:564.5px;top:180px;font-size:10.5px;font-weight:400;-webkit-text-stroke:0.4px #4a4f57;letter-spacing:1.12px;line-height:12px;color:#4a4f57;transform:scaleX(0.85);transform-origin:0 0">RECENT ENGAGEMENTS</div>
<div class="t" style="right:255px;top:180px;font-size:10.5px;letter-spacing:0.96px;line-height:12px;color:#5c6370;transform:scaleX(0.88);transform-origin:100% 0">TOTAL TIME SPENT (LAST 90 DAYS): <span style="color:#4a4f57;-webkit-text-stroke:0.35px #4a4f57;letter-spacing:1.2px">48:32</span></div>
<svg class="abs" style="left:1199px;top:180px" width="12" height="10" viewBox="0 0 12 10"><path d="M2 7.6 L6 3.6 L10 7.6" fill="none" stroke="#2b2f36" stroke-width="1.2" stroke-linecap="round" stroke-linejoin="round"/></svg>
<div class="t" style="left:546px;top:217px;font-size:8.8px;font-weight:400;-webkit-text-stroke:0.3px #5c6370;line-height:10px;color:#5c6370;letter-spacing:1.05px;transform:scaleX(0.85);transform-origin:0 0">JAN 2025</div>
<div class="t" style="left:1172px;top:217px;font-size:8.8px;font-weight:400;-webkit-text-stroke:0.3px #5c6370;line-height:10px;color:#5c6370;letter-spacing:1.05px;transform:scaleX(0.85);transform-origin:0 0">MAY 2025</div>
<div class="abs" style="left:592px;top:218px;width:46px;height:6px;border-radius:3px;background:#26a09a"></div>
<div class="abs" style="left:644px;top:218px;width:207px;height:6px;border-radius:3px;background:#df7426"></div>
<div class="abs" style="left:856px;top:218px;width:207px;height:6px;border-radius:3px;background:#26a09a"></div>
<div class="abs" style="left:1069px;top:218px;width:46px;height:6px;border-radius:3px;background:#e3173d"></div>
<div class="abs" style="left:1121px;top:218px;width:46px;height:6px;border-radius:3px;background:#e3173d"></div>
<svg class="abs" style="left:1204px;top:162px" width="20" height="20" viewBox="0 0 20 20"><path d="M4.5 2.2 Q4.6 0.8 5.9 0.9 Q7.1 1 7.2 2.3 L8 8 Q8.5 7.2 9.6 7.4 Q10.6 7.6 10.8 8.5 Q11.5 7.9 12.5 8.3 Q13.3 8.7 13.4 9.5 Q14.1 9.1 14.9 9.5 Q15.7 10 15.8 11 L16 14.5 Q16 17.5 13.5 18.8 H9 Q7.3 18.5 6 16.3 L2.8 11.8 Q2.2 10.7 3.1 10.2 Q4 9.8 4.8 10.6 L5.5 11.3 Z" fill="#fff" stroke="#222" stroke-width="1" stroke-linejoin="round"/><path d="M9.2 12.8 V16 M11.4 12.8 V16 M13.6 12.8 V16" stroke="#222" stroke-width="0.9" stroke-linecap="round"/></svg>
<div class="abs" style="left:529px;top:258px;width:701px;height:144px;border-radius:10px;padding:1px;background:linear-gradient(180deg,#f66d9d 0%,#e98ad8 22%,#c9a0f6 42%,#a6bdf9 62%,#8fd0f8 85%,#8fd3f6 100%);box-shadow:0 2px 6px rgba(20,30,50,0.05)"><div style="width:100%;height:100%;border-radius:9px;background:#fff"></div></div>
<div class="abs" style="left:545px;top:274px;width:327px;height:20px;border-radius:4px;background:#eef4fd"></div>
<svg class="abs" style="left:548px;top:275px" width="18" height="18" viewBox="0 0 18 18"><path d="M7.5 3.5 Q8.3 9.4 14.5 10.3 Q8.3 11.2 7.5 17 Q6.7 11.2 0.5 10.3 Q6.7 9.4 7.5 3.5 Z" fill="#1566e0"/><path d="M14 1 Q14.3 3 16.3 3.3 Q14.3 3.6 14 5.6 Q13.7 3.6 11.7 3.3 Q13.7 3 14 1 Z" fill="#1566e0"/></svg>
<div class="t" style="left:568px;top:278px;font-size:10.5px;font-weight:400;-webkit-text-stroke:0.4px #1a6ee8;letter-spacing:1.5px;line-height:12px;color:#1a6ee8;transform:scaleX(0.85);transform-origin:0 0">ESCALATED FROM VIRTUAL AGENT (JANUARY 14, 2025)</div>
<svg class="abs" style="left:1199px;top:276px" width="12" height="10" viewBox="0 0 12 10"><path d="M2 7.6 L6 3.6 L10 7.6" fill="none" stroke="#2b2f36" stroke-width="1.2" stroke-linecap="round" stroke-linejoin="round"/></svg>
<div class="t" style="left:545.5px;top:308.5px;font-size:14.8px;letter-spacing:0px;line-height:17px;color:#3b3f46">The consumer came into the conversation <span style="color:#6e7580">via a bot</span>, then Agent Sophia Mosley helped the consumer</div>
<div class="t" style="left:545.5px;top:328.5px;font-size:14.8px;letter-spacing:0.055px;line-height:17px;color:#3b3f46">cancel the order #4467389100 and there is no return needed. Agent Clara Arellano helped the</div>
<div class="t" style="left:545.5px;top:348.5px;font-size:14.8px;letter-spacing:0.045px;line-height:17px;color:#3b3f46">consumer with his second inquiry around billing questions. She reassured the customer that the</div>
<div class="t" style="left:545.5px;top:368.5px;font-size:14.8px;letter-spacing:0.055px;line-height:17px;color:#3b3f46">refund will be issued to his payment method on file.</div>
<div class="abs" style="left:529px;top:418px;width:701px;height:166px;border-radius:10px;border:1px solid #9fc3f2;background:#fff;box-shadow:0 2px 6px rgba(20,30,50,0.05)"></div>
<div class="abs" style="left:545px;top:434px;width:161px;height:20px;border-radius:4px;background:#eff2f5"></div>
<svg class="abs" style="left:548px;top:437px" width="15" height="14" viewBox="0 0 15 14"><path d="M1.5 4.5 Q1.5 3 3 3 H4.5 L5.7 1.5 H9.3 L10.5 3 H12 Q13.5 3 13.5 4.5 V11 Q13.5 12.5 12 12.5 H3 Q1.5 12.5 1.5 11 Z" fill="#4a4f57"/><circle cx="7.5" cy="7.6" r="2.6" fill="#eff2f5"/><circle cx="7.5" cy="7.6" r="1.5" fill="#4a4f57"/></svg>
<div class="t" style="left:566px;top:438px;font-size:10.5px;font-weight:400;-webkit-text-stroke:0.4px #4a4f57;letter-spacing:1.27px;line-height:12px;color:#4a4f57;transform:scaleX(0.85);transform-origin:0 0">ENGAGEMENT SNAPSHOT</div>
<div class="t" style="right:255px;top:438px;font-size:10.5px;letter-spacing:0.8px;line-height:12px;color:#5c6370;transform:scaleX(0.88);transform-origin:100% 0">LAST ENGAGEMENT: <span style="color:#4a4f57;-webkit-text-stroke:0.35px #4a4f57;letter-spacing:1.0px">20 DAYS AGO</span></div>
<svg class="abs" style="left:1199px;top:438px" width="12" height="10" viewBox="0 0 12 10"><path d="M2 7.6 L6 3.6 L10 7.6" fill="none" stroke="#2b2f36" stroke-width="1.2" stroke-linecap="round" stroke-linejoin="round"/></svg>
<div class="t" style="left:545.5px;top:466px;font-size:14px;letter-spacing:0px;line-height:16px;color:#3b3f46">Name: Emily Chen</div>
<div class="t" style="left:884.5px;top:466px;font-size:14px;letter-spacing:0.15px;line-height:16px;color:#3b3f46">City: San Jose</div>
<div class="t" style="left:545.5px;top:492px;font-size:14px;letter-spacing:0.25px;line-height:16px;color:#3b3f46">Account: A915KJW</div>
<div class="t" style="left:884.5px;top:492px;font-size:14px;letter-spacing:0.2px;line-height:16px;color:#3b3f46">State: California</div>
<div class="t" style="left:545.5px;top:518px;font-size:14px;letter-spacing:0px;line-height:16px;color:#3b3f46">Phone number: <span style="letter-spacing:1.1px">555-555-5555</span></div>
<div class="t" style="left:884.5px;top:518px;font-size:14px;letter-spacing:0.18px;line-height:16px;color:#3b3f46">Category: General</div>
<div class="t" style="left:1128px;top:548px;font-size:13px;line-height:15px;color:#1a6ee8">View more</div>
<svg class="abs" style="left:1193px;top:549px" width="12" height="12" viewBox="0 0 12 12"><path d="M2 10 L10 2 M4 2 H10 V8" fill="none" stroke="#1a6ee8" stroke-width="1.3" stroke-linecap="round" stroke-linejoin="round"/></svg>
<div class="abs" style="left:530px;top:607px;width:325px;height:2px;background:#fdb6c3"></div>
<div class="abs" style="left:904px;top:607px;width:326px;height:2px;background:#fdb6c3"></div>
<div class="t" style="left:863px;top:600.5px;font-size:12.7px;line-height:15px;color:#dc1f48">Today</div>
<div class="t" style="left:588px;top:634px;font-size:11.5px;line-height:13px;color:#3b3f46">You</div>
<div class="t" style="left:616px;top:634px;font-size:12px;line-height:13px;color:#8a9099">9:22 AM</div>
<div class="abs" style="left:529.5px;top:652px;width:36px;height:36px;border-radius:9px;background:#a3c6f4;overflow:hidden"><svg width="36" height="36" viewBox="0 0 36 36"><path d="M1 37 Q3 31 11 29.5 L22 29 Q31 30.5 34 37 Z" fill="#d9e3f1"/><path d="M16 32.5 L19.5 32.5 L20 37 L15.5 37 Z" fill="#2b5cb8"/><path d="M12 24 L13 31 Q17 33 21.5 30.5 L22 25 Z" fill="#6e432e"/><path d="M17.5 12 Q23 10 28 11.5 Q30.5 14 30.5 19 L28.5 21.5 Q29 24 27.5 26 Q26 30 23 30.5 Q19 30.5 16.5 27 Q15 23 15.5 18 Z" fill="#95614a"/><path d="M19.5 17.2 H30.5" stroke="#2a2a2a" stroke-width="1"/><rect x="21" y="17" width="3.6" height="2.4" rx="0.8" fill="none" stroke="#2a2a2a" stroke-width="0.6"/><path d="M10.5 25.5 Q6 23 5 17 Q3.5 12 7 8 Q9 3 15 2.5 Q19 0.8 24 2.5 Q29 3.5 30.5 8 Q33 12 31.5 16.5 L30 18.5 Q29.5 13 27.5 11.5 Q23 10 20.7 11.2 Q18.5 13 17.7 16.6 Q16 19 15 22 Q13 25 10.5 25.5 Z" fill="#332b27"/></svg></div>
<div class="abs" style="left:576px;top:652px;width:273px;height:36px;border-radius:11px;background:#e6f0fc"></div>
<div class="t" style="left:588px;top:663px;font-size:14px;letter-spacing:-0.07px;line-height:16px;color:#1f2328">Got it. Let me pull up your recent orders.</div>
<div class="abs" style="left:576px;top:692px;width:410px;height:36px;border-radius:11px;background:#e6f0fc"></div>
<div class="t" style="left:591px;top:703px;font-size:14px;letter-spacing:-0.07px;line-height:16px;color:#1f2328">Is this regarding order #5582917643 placed on July 15th?</div>
<div class="t" style="left:576px;top:746px;font-size:11.5px;line-height:13px;color:#3b3f46">Emily Chen</div>
<div class="t" style="left:642px;top:746px;font-size:12px;line-height:13px;color:#8a9099">9:23 AM</div>
<div class="abs" style="left:529.5px;top:764px;width:36px;height:36px;border-radius:9px;background:#f7c3a0;overflow:hidden"><svg width="36" height="36" viewBox="0 0 36 36"><path d="M3 37 Q4 28 6.5 20 Q8 10 12 6.5 Q17 3.5 22.5 5 Q28 7 29.5 14 Q31 22 30.5 30 L31 37 Z" fill="#38302f"/><path d="M20.5 26 L21 33 Q25 35 29 33 L28.5 26 Z" fill="#dcae90"/><path d="M22.7 8.2 Q27.5 9 28.5 14 Q29 19 28.2 23 Q27 27.5 23.5 27.8 Q20 27.8 18.5 25 Q17.5 21 18.5 15 Q20 10 22.7 8.2 Z" fill="#ebc5aa"/><path d="M22.7 6.5 Q18 9 17.5 16 Q17 22 18.5 28 Q19 33 21 37 H12 Q13 25 14 16 Q16 8 22.7 6.5 Z" fill="#38302f"/><path d="M23.5 23.6 Q25 24.4 26.5 23.6" stroke="#c56a72" stroke-width="0.9" fill="none"/><path d="M24 35.5 Q28 33.5 31 35 L31 37 H24 Z" fill="#2b3350"/></svg></div>
<div class="abs" style="left:576px;top:764px;width:272px;height:36px;border-radius:11px;background:#efeff2"></div>
<div class="t" style="left:588px;top:775px;font-size:14px;letter-spacing:-0.07px;line-height:16px;color:#1f2328">Yes, I need it sent to a different address.</div>
<div class="t" style="left:576px;top:818px;font-size:11.5px;line-height:13px;color:#3b3f46">You</div>
<div class="t" style="left:603px;top:818px;font-size:12px;line-height:13px;color:#8a9099">9:24 AM</div>
<div class="abs" style="left:529.5px;top:836px;width:36px;height:36px;border-radius:9px;background:#a3c6f4;overflow:hidden"><svg width="36" height="36" viewBox="0 0 36 36"><path d="M1 37 Q3 31 11 29.5 L22 29 Q31 30.5 34 37 Z" fill="#d9e3f1"/><path d="M16 32.5 L19.5 32.5 L20 37 L15.5 37 Z" fill="#2b5cb8"/><path d="M12 24 L13 31 Q17 33 21.5 30.5 L22 25 Z" fill="#6e432e"/><path d="M17.5 12 Q23 10 28 11.5 Q30.5 14 30.5 19 L28.5 21.5 Q29 24 27.5 26 Q26 30 23 30.5 Q19 30.5 16.5 27 Q15 23 15.5 18 Z" fill="#95614a"/><path d="M19.5 17.2 H30.5" stroke="#2a2a2a" stroke-width="1"/><rect x="21" y="17" width="3.6" height="2.4" rx="0.8" fill="none" stroke="#2a2a2a" stroke-width="0.6"/><path d="M10.5 25.5 Q6 23 5 17 Q3.5 12 7 8 Q9 3 15 2.5 Q19 0.8 24 2.5 Q29 3.5 30.5 8 Q33 12 31.5 16.5 L30 18.5 Q29.5 13 27.5 11.5 Q23 10 20.7 11.2 Q18.5 13 17.7 16.6 Q16 19 15 22 Q13 25 10.5 25.5 Z" fill="#332b27"/></svg></div>
<div class="abs" style="left:576px;top:836px;width:419px;height:36px;border-radius:11px;background:#e6f0fc"></div>
<div class="t" style="left:588px;top:847px;font-size:14px;letter-spacing:-0.13px;line-height:16px;color:#1f2328">No problem. Can you please confirm the new shipping address?</div>
<div class="abs" style="left:373px;top:860px;width:1013px;height:52px;background:#fff"></div>
<div class="abs" style="left:373px;top:860px;width:1013px;height:1px;background:#e1e4e9"></div>
<svg class="abs" style="left:401px;top:865px" width="24" height="24" viewBox="0 0 24 24"><rect x="9" y="2" width="6" height="13" rx="3" fill="none" stroke="#5c6370" stroke-width="1.4" stroke-linecap="round" stroke-linejoin="round"/><path d="M5.5 11 Q5.5 18 12 18 Q18.5 18 18.5 11 M12 18 V22 M8.5 22 H15.5" fill="none" stroke="#5c6370" stroke-width="1.4" stroke-linecap="round" stroke-linejoin="round"/></svg><div class="t" style="left:363px;width:100px;text-align:center;top:892px;font-size:13px;line-height:15px;color:#5c6370">Mute</div>
<svg class="abs" style="left:659px;top:865px" width="24" height="24" viewBox="0 0 24 24"><path d="M19.6 6.2 A9.6 9.6 0 1 0 19.8 17.6" fill="none" stroke="#5c6370" stroke-width="1.4" stroke-linecap="round" stroke-linejoin="round"/><path d="M16.6 7 H20.6 V3" fill="none" stroke="#5c6370" stroke-width="1.4" stroke-linecap="round" stroke-linejoin="round"/><path d="M9.6 9 V15 M14.2 9 V15" fill="none" stroke="#5c6370" stroke-width="1.4" stroke-linecap="round" stroke-linejoin="round"/></svg><div class="t" style="left:621px;width:100px;text-align:center;top:892px;font-size:13px;line-height:15px;color:#5c6370">Hold</div>
<svg class="abs" style="left:739px;top:865px" width="24" height="24" viewBox="0 0 24 24"><path d="M12 4 V20 M4 12 H20" fill="none" stroke="#5c6370" stroke-width="1.4" stroke-linecap="round" stroke-linejoin="round" stroke-width="1.6"/></svg><div class="t" style="left:701px;width:100px;text-align:center;top:892px;font-size:13px;line-height:15px;color:#5c6370">Add Call</div>
<svg class="abs" style="left:825px;top:865px" width="24" height="24" viewBox="0 0 24 24"><circle cx="4.5" cy="4.5" r="2.6" fill="#9aa0a8"/><circle cx="4.5" cy="12.0" r="2.6" fill="#9aa0a8"/><circle cx="4.5" cy="19.5" r="2.6" fill="#9aa0a8"/><circle cx="12.0" cy="4.5" r="2.6" fill="#9aa0a8"/><circle cx="12.0" cy="12.0" r="2.6" fill="#9aa0a8"/><circle cx="12.0" cy="19.5" r="2.6" fill="#9aa0a8"/><circle cx="19.5" cy="4.5" r="2.6" fill="#9aa0a8"/><circle cx="19.5" cy="12.0" r="2.6" fill="#9aa0a8"/><circle cx="19.5" cy="19.5" r="2.6" fill="#9aa0a8"/></svg><div class="t" style="left:787px;width:100px;text-align:center;top:892px;font-size:13px;line-height:15px;color:#8a9099">Keypad</div>
<svg class="abs" style="left:923px;top:865px" width="24" height="24" viewBox="0 0 24 24"><rect x="1.5" y="3.5" width="21" height="16" rx="2" fill="none" stroke="#5c6370" stroke-width="1.4" stroke-linecap="round" stroke-linejoin="round"/><text x="12" y="15.5" text-anchor="middle" font-family="Liberation Sans" font-size="9" fill="#5c6370">CC</text></svg><div class="t" style="left:885px;width:100px;text-align:center;top:892px;font-size:13px;line-height:15px;color:#5c6370">Show Caption</div>
<svg class="abs" style="left:1015px;top:865px" width="24" height="24" viewBox="0 0 24 24"><path d="M3 5 H11 M3 10 H9 M3 15 H9 M3 20 H21" fill="none" stroke="#5c6370" stroke-width="1.4" stroke-linecap="round" stroke-linejoin="round"/><path d="M13 15 V11 Q13 8 16 8 H21 M18 5 L21 8 L18 11" fill="none" stroke="#5c6370" stroke-width="1.4" stroke-linecap="round" stroke-linejoin="round"/></svg><div class="t" style="left:977px;width:100px;text-align:center;top:892px;font-size:13px;line-height:15px;color:#5c6370">Transfer</div>
<svg class="abs" style="left:1095px;top:865px" width="24" height="24" viewBox="0 0 24 24"><circle cx="4" cy="12" r="2" fill="#5c6370"/><circle cx="12" cy="12" r="2" fill="#5c6370"/><circle cx="20" cy="12" r="2" fill="#5c6370"/></svg><div class="t" style="left:1057px;width:100px;text-align:center;top:892px;font-size:13px;line-height:15px;color:#5c6370">More</div>
<div class="abs" style="left:1325px;top:870px;width:49px;height:32px;border-radius:8px;background:#d9163a;color:#fff;font-size:14px;line-height:32px;text-align:center">End</div>
<div class="abs" style="left:1166px;top:114px;width:76px;height:22px;border-radius:4px;background:#fff;box-shadow:0 1px 4px rgba(0,0,0,0.18)"></div>
<div class="t" style="left:1171px;top:118px;font-size:12.4px;line-height:14px;color:#2b2f36">Collapse all</div>
 <svg class="abs" style="left:1409px;top:81px" width="14" height="14" viewBox="0 0 14 14"><path d="M7 3 L3 7 L7 11 M11.5 3 L7.5 7 L11.5 11" fill="none" stroke="#2b2f36" stroke-width="1.5" stroke-linecap="round" stroke-linejoin="round"/></svg>
<svg class="abs" style="left:1406px;top:118px" width="20" height="20" viewBox="0 0 20 20"><circle cx="10" cy="6.3" r="3" fill="none" stroke="#5c6370" stroke-width="1.1" stroke-linecap="round" stroke-linejoin="round"/><path d="M3.5 16 Q3.5 11.8 10 11.8 Q16.5 11.8 16.5 16 Q16.5 17.6 15 17.6 H5 Q3.5 17.6 3.5 16 Z" fill="none" stroke="#5c6370" stroke-width="1.1" stroke-linecap="round" stroke-linejoin="round"/></svg>
<svg class="abs" style="left:1406px;top:158px" width="20" height="20" viewBox="0 0 20 20"><rect x="3" y="3.5" width="14" height="15" rx="1.5" fill="none" stroke="#5c6370" stroke-width="1.1" stroke-linecap="round" stroke-linejoin="round"/><rect x="7.5" y="2" width="5" height="2.5" rx="0.8" fill="#5c6370"/><path d="M6 8 H7 M9 8 H14 M6 11 H7 M9 11 H14 M6 14 H7 M9 14 H14" fill="none" stroke="#5c6370" stroke-width="1.1" stroke-linecap="round" stroke-linejoin="round"/></svg>
<div class="abs" style="left:1400px;top:192px;width:32px;height:1px;background:#e1e4e9"></div>
<svg class="abs" style="left:1406px;top:207px" width="20" height="20" viewBox="0 0 20 20"><g fill="none" stroke="#8a9099" stroke-width="1.3" stroke-linecap="round"><path d="M4.5 10 Q4.5 4 10 4 Q15.5 4 15.5 10"/><path d="M15.5 10 Q15.5 14.5 11 15"/></g><path d="M3.5 8 Q2 8.5 2 10 Q2 11.5 3.5 12 Z M16.5 8 Q18 8.5 18 10 Q18 11.5 16.5 12 Z" fill="#8a9099"/><path d="M10.5 6.5 Q10.8 9 13 9.3 Q10.8 9.6 10.5 12 Q10.2 9.6 8 9.3 Q10.2 9 10.5 6.5 Z" fill="#8a9099"/></svg>
<div class="abs" style="left:1400px;top:241px;width:32px;height:1px;background:#e1e4e9"></div>
<div class="t" style="left:1402px;top:259px;font-size:12px;line-height:14px;color:#7a818b">Apps</div>
<div class="abs" style="left:1400px;top:290px;width:32px;height:32px;border-radius:8px;border:1px solid #eef0f3;background:#fff"></div>
<svg class="abs" style="left:1402px;top:292px" width="28" height="28" viewBox="0 0 28 28"><defs><clipPath id="cp292"><rect width="28" height="28" rx="6"/></clipPath></defs><g clip-path="url(#cp292)"><rect x="0" y="0" width="7" height="7" fill="#000"/><rect x="0" y="14" width="7" height="7" fill="#000"/><rect x="7" y="7" width="7" height="7" fill="#000"/><rect x="7" y="21" width="7" height="7" fill="#000"/><rect x="14" y="0" width="7" height="7" fill="#000"/><rect x="14" y="14" width="7" height="7" fill="#000"/><rect x="21" y="7" width="7" height="7" fill="#000"/><rect x="21" y="21" width="7" height="7" fill="#000"/></g></svg>
<div class="abs" style="left:1400px;top:330px;width:32px;height:32px;border-radius:8px;border:1px solid #eef0f3;background:#fff"></div>
<svg class="abs" style="left:1402px;top:332px" width="28" height="28" viewBox="0 0 28 28"><defs><clipPath id="cp332"><rect width="28" height="28" rx="6"/></clipPath></defs><g clip-path="url(#cp332)"><rect x="0" y="0" width="7" height="7" fill="#000"/><rect x="0" y="14" width="7" height="7" fill="#000"/><rect x="7" y="7" width="7" height="7" fill="#000"/><rect x="7" y="21" width="7" height="7" fill="#000"/><rect x="14" y="0" width="7" height="7" fill="#000"/><rect x="14" y="14" width="7" height="7" fill="#000"/><rect x="21" y="7" width="7" height="7" fill="#000"/><rect x="21" y="21" width="7" height="7" fill="#000"/></g></svg>
<div class="abs" style="left:1400px;top:370px;width:32px;height:32px;border-radius:8px;border:1px solid #eef0f3;background:#fff"></div>
<svg class="abs" style="left:1402px;top:372px" width="28" height="28" viewBox="0 0 28 28"><defs><clipPath id="cp372"><rect width="28" height="28" rx="6"/></clipPath></defs><g clip-path="url(#cp372)"><rect x="0" y="0" width="7" height="7" fill="#000"/><rect x="0" y="14" width="7" height="7" fill="#000"/><rect x="7" y="7" width="7" height="7" fill="#000"/><rect x="7" y="21" width="7" height="7" fill="#000"/><rect x="14" y="0" width="7" height="7" fill="#000"/><rect x="14" y="14" width="7" height="7" fill="#000"/><rect x="21" y="7" width="7" height="7" fill="#000"/><rect x="21" y="21" width="7" height="7" fill="#000"/></g></svg>
</div>
</body></html>
